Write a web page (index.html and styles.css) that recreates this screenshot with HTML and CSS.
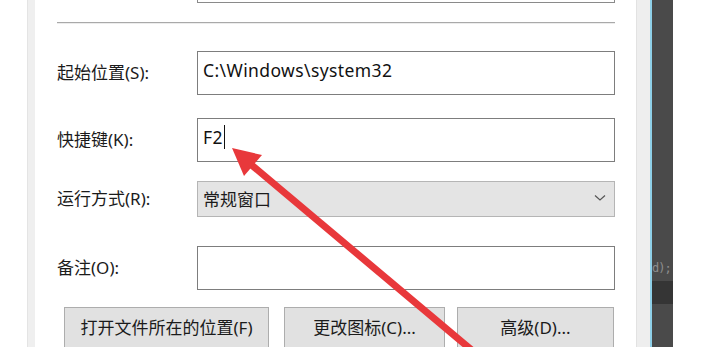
FILE: index.html
```html
<!DOCTYPE html>
<html lang="zh-CN">

<head>
    <meta charset="UTF-8">
    <title>属性 - 快捷方式</title>
    <link rel="stylesheet" href="styles.css">
</head>

<body>
    <div class="screen">
        <div class="outside"></div>
        <div class="edge"></div>

        <main class="dialog">
            <div class="prev-field"></div>
            <div class="sep"></div>

            <div class="row row-start">
                <label class="lbl">起始位置(S):</label>
                <div class="field">C:\Windows\system32</div>
            </div>

            <div class="row row-key">
                <label class="lbl">快捷键(K):</label>
                <div class="field"><span class="caret">F2</span></div>
            </div>

            <div class="row row-run">
                <label class="lbl">运行方式(R):</label>
                <div class="select">
                    <span>常规窗口</span>
                    <svg class="chev" width="12" height="8" viewBox="0 0 12 8">
                        <polyline points="1,1.5 6,6 11,1.5" fill="none" stroke="#555" stroke-width="1.2" />
                    </svg>
                </div>
            </div>

            <div class="row row-note">
                <label class="lbl">备注(O):</label>
                <div class="field"></div>
            </div>

            <div class="buttons">
                <button class="btn btn-open">打开文件所在的位置(F)</button>
                <button class="btn btn-icon">更改图标(C)...</button>
                <button class="btn btn-adv">高级(D)...</button>
            </div>
        </main>

        <div class="sidebar"></div>
        <div class="accent"></div>
        <div class="editor">
            <div class="editor-code">d);</div>
            <div class="editor-band"></div>
        </div>
    </div>

    <!-- red annotation arrow drawn over the dialog -->
    <svg class="arrow" width="708" height="347" viewBox="0 0 708 347">
        <line x1="248" y1="162" x2="474" y2="352" stroke="#e8383b" stroke-width="7" />
        <polygon points="232,148 262,155 244,176" fill="#e8383b" />
    </svg>
</body>

</html>
```

FILE: styles.css
```css
body {
    margin: 0;
    background-color: #fff;
    font-family: "Noto Sans", "Noto Sans CJK SC", sans-serif;
    color: #1b1b1b;
    overflow: hidden;
}

.screen {
    display: flex;
    height: 347px;
    overflow: hidden;
}

.outside {
    width: 27px;
    flex: none;
}

.edge {
    width: 8px;
    flex: none;
    background-color: #efefef;
    border-left: 1px solid #e4e4e4;
    box-sizing: border-box;
}

.dialog {
    width: 601px;
    flex: none;
    padding: 0 21px 0 22px;
    box-sizing: border-box;
}

.prev-field {
    height: 3px;
    margin-left: 140px;
    border: 1px solid #8a8a8a;
    border-top: none;
    box-sizing: border-box;
}

.sep {
    height: 2px;
    margin-top: 19px;
    border-top: 1px solid #a9a9a9;
    border-bottom: 1px solid #ececec;
    box-sizing: border-box;
}

.row {
    display: flex;
    align-items: center;
}

.row-start {
    margin-top: 27px;
}

.row-key {
    margin-top: 23px;
}

.row-run {
    margin-top: 19px;
}

.row-note {
    margin-top: 29px;
}

.lbl {
    width: 140px;
    flex: none;
    font-size: 17px;
    padding-bottom: 4px;
}

.field {
    width: 418px;
    height: 44px;
    box-sizing: border-box;
    border: 1px solid #7d7d7d;
    padding: 0 0 6px 5px;
    display: flex;
    align-items: center;
    font-size: 17.5px;
    letter-spacing: 0.4px;
    color: #111;
}

.caret {
    border-right: 1px solid #111;
    padding-right: 1px;
    line-height: 24px;
}

.select {
    width: 418px;
    height: 36px;
    box-sizing: border-box;
    border: 1px solid #b5b5b5;
    background-color: #e4e4e4;
    padding: 0 8px 2px 5px;
    display: flex;
    align-items: center;
    justify-content: space-between;
    font-size: 17px;
}

.buttons {
    display: flex;
    margin: 17px 0 0 7px;
}

.btn {
    height: 44px;
    border: 1px solid #adadad;
    background-color: #e1e1e1;
    font-family: "Noto Sans", "Noto Sans CJK SC", sans-serif;
    font-size: 17px;
    color: #1b1b1b;
    padding: 0 0 6px;
}

.btn-open {
    width: 205px;
}

.btn-icon {
    width: 161px;
    margin-left: 15px;
}

.btn-adv {
    width: 157px;
    margin-left: 12px;
}

.sidebar {
    width: 14px;
    flex: none;
    background-color: #eeeeee;
    border-left: 1px solid #e2e2e2;
    box-sizing: border-box;
}

.accent {
    width: 2px;
    flex: none;
    background-color: #8fd0e8;
}

.editor {
    width: 21px;
    flex: none;
    background-color: #4a4a4a;
    overflow: hidden;
    display: flex;
    flex-direction: column;
}

.editor-code {
    margin-top: 261px;
    font-family: "DejaVu Sans Mono", monospace;
    font-size: 12px;
    letter-spacing: -1px;
    color: #8d8d8d;
    white-space: nowrap;
}

.editor-band {
    height: 23px;
    margin-top: 6px;
    background-color: #353535;
}

.arrow {
    position: absolute;
    left: 0;
    top: 0;
}
```
